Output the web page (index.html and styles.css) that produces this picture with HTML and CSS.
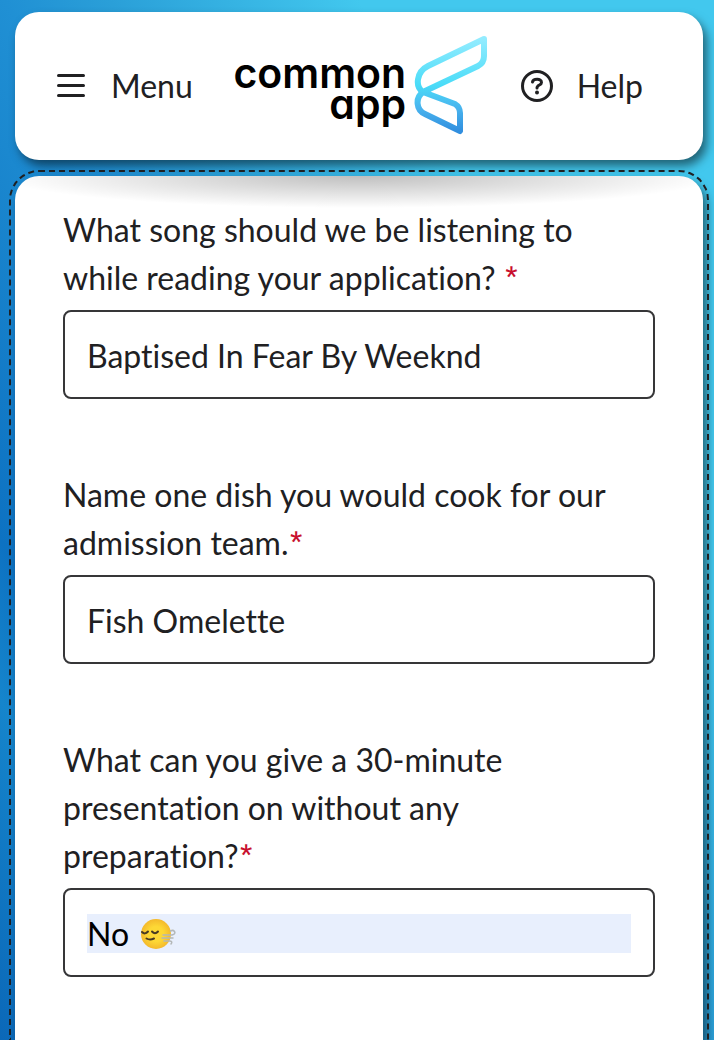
FILE: index.html
```html
<!DOCTYPE html>
<html lang="en">
<head>
    <meta charset="UTF-8">
    <meta name="viewport" content="width=device-width, initial-scale=1.0">
    <title>Common App</title>
    <link rel="stylesheet" href="styles.css">
</head>
<body>
    <header class="top-bar">
        <button type="button" class="nav-btn">
            <svg class="nav-icon" width="32" height="32" viewBox="0 0 32 32" fill="none" stroke="#202022" stroke-width="3" stroke-linecap="round">
                <path d="M3.500 5.500H28.500M3.500 15.500H28.500M3.500 25.500H28.500"/>
            </svg>
            <span>Menu</span>
        </button>
        <a href="#" class="logo">
            <span class="logo-text">common<br>app</span>
            <svg class="logo-mark" width="74" height="102" viewBox="0 0 74 102" fill="none">
                <defs>
                    <linearGradient id="mark" x1="0" y1="0" x2="0" y2="1">
                        <stop offset="0" stop-color="#93ecff"/>
                        <stop offset="0.5" stop-color="#4adcf8"/>
                        <stop offset="0.75" stop-color="#49b4ee"/>
                        <stop offset="1" stop-color="#318fdf"/>
                    </linearGradient>
                </defs>
                <path stroke="url(#mark)" stroke-width="6" stroke-linejoin="round" d="M70 4L14 31C2 37 1 52 9 57L64 31Q70 28 70 21ZM9 57C1 63 2 75 11 79L46 96V78Q46 72 41 69L9 57"/>
            </svg>
        </a>
        <button type="button" class="nav-btn">
            <svg class="nav-icon" width="32" height="32" viewBox="0 0 32 32" fill="none" stroke="#202022" stroke-width="3" stroke-linecap="round">
                <circle cx="16" cy="16" r="14.500"/>
                <path d="M11.500 12C12 8.800 20.500 8 20.500 12.500C20.500 15.500 16 14.500 16 18"/>
                <circle cx="16" cy="22.500" r="2" fill="#202022" stroke="none"/>
            </svg>
            <span>Help</span>
        </button>
    </header>

    <main class="card">
        <form class="questions">
            <div class="form-group">
                <label for="song">What song should we be listening to while reading your application? <span class="required">*</span></label>
                <input type="text" id="song" name="song" value="Baptised In Fear By Weeknd" required>
            </div>
            <div class="form-group">
                <label for="dish">Name one dish you would cook for our admission team.<span class="required">*</span></label>
                <input type="text" id="dish" name="dish" value="Fish Omelette" required>
            </div>
            <div class="form-group">
                <label for="talk">What can you give a 30-minute presentation on without any <span class="last-word">preparation?<span class="required">*</span></span></label>
                <div class="emoji-field">
                    <input type="text" id="talk" name="talk" class="filled" value="No" required>
                    <svg class="emoji" width="38" height="32" viewBox="0 0 38 32" fill="none" stroke-linecap="round">
                        <defs>
                            <radialGradient id="face">
                                <stop offset="0.5" stop-color="#fdd835"/>
                                <stop offset="1" stop-color="#f4b92c"/>
                            </radialGradient>
                        </defs>
                        <circle cx="17" cy="16" r="15" fill="url(#face)"/>
                        <path stroke="#493b24" stroke-width="2" d="M3 14Q6 17 9 13.500M13 13.500Q16 17 19 13.500M7.500 20.500Q11 22.500 15 20.500"/>
                        <path stroke="#b4b8b8" stroke-width="1.500" d="M24 17H33Q37 16 35.500 13.500Q34 11.500 31.500 13M23 20H34M25 23H31Q34 23.500 32 26"/>
                    </svg>
                </div>
            </div>
        </form>
    </main>
</body>
</html>
```
FILE: styles.css
```css
* {
    box-sizing: border-box;
}

body {
    margin: 0;
    min-height: 100vh;
    padding: 12px 11px 0 15px;
    display: flex;
    flex-direction: column;
    gap: 16px;
    font-family: Lato, sans-serif;
    font-size: 32px;
    font-variant-ligatures: none;
    line-height: 48px;
    color: #202022;
    background: linear-gradient(60deg, #0b68b8 0%, #1585cc 15%, #0d72c2 22%, #2090d4 46%, #2a9fd8 54%, #42c8ee 73%);
}

.top-bar {
    display: flex;
    align-items: center;
    justify-content: space-between;
    height: 148px;
    padding: 0 60px 0 40px;
    border-radius: 24px;
    background-color: #ffffff;
    box-shadow: 4px 6px 10px rgba(0, 0, 0, 0.5);
}

.nav-btn {
    display: flex;
    align-items: center;
    gap: 24px;
    padding: 0;
    border: none;
    background: none;
    font: inherit;
    color: inherit;
    cursor: pointer;
}

.nav-icon {
    flex: none;
}

.logo {
    display: flex;
    align-items: center;
    gap: 8px;
    margin-left: 8px;
    color: #000000;
    text-decoration: none;
}

.logo-text {
    padding-top: 6px;
    font-family: Inter, sans-serif;
    font-size: 41px;
    font-weight: 600;
    line-height: 31px;
    text-align: right;
    font-feature-settings: "cv11";
}

.card {
    position: relative;
    flex: 1;
    padding: 30px 48px 62px;
    border-radius: 24px 24px 0 0;
    background: radial-gradient(ellipse 360px 32px at 50% 0, rgba(0, 0, 0, 0.25), rgba(0, 0, 0, 0)) #ffffff;
    box-shadow: 4px 6px 10px rgba(0, 0, 0, 0.5);
}

.card::before {
    content: "";
    position: absolute;
    inset: -6px -6px 0;
    border: 2px dashed #202022;
    border-bottom: none;
    border-radius: 30px 30px 0 0;
    pointer-events: none;
}

.questions {
    display: flex;
    flex-direction: column;
    gap: 72px;
}

label {
    display: block;
    margin-bottom: 8px;
}

.last-word {
    white-space: nowrap;
}

.required {
    font-family: Figtree, Inter, sans-serif;
    line-height: 1;
    color: #c8102e;
}

input {
    display: block;
    width: 100%;
    height: 89px;
    padding: 24px 22px 22px;
    border: 2px solid #363638;
    border-radius: 8px;
    font: inherit;
    font-variant-ligatures: none;
    color: inherit;
    background-color: #ffffff;
}

.emoji-field {
    position: relative;
}

.filled {
    color: #000000;
    background-color: #e8effd;
    background-clip: content-box;
}

.emoji {
    position: absolute;
    top: 30px;
    left: 76px;
}
```
